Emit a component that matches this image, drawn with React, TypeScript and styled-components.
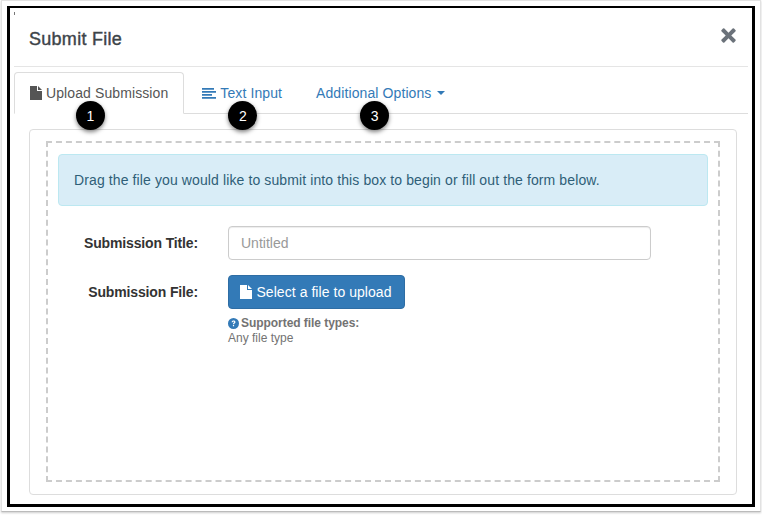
import styled, { createGlobalStyle } from "styled-components";

const GlobalStyle = createGlobalStyle`
  html, body {
    margin: 0;
    padding: 0;
    background: #fff;
  }
  body {
    font-family: "Liberation Sans", Arial, sans-serif;
    color: #333;
  }
`;

const Page = styled.div`
  position: relative;
  width: 762px;
  height: 515px;
  box-sizing: border-box;
  padding: 0 1px 3px 1px;
  background: #fff;
`;

const Shot = styled.div`
  height: 100%;
  box-sizing: border-box;
  border: 1px solid #e2e2e2;
  border-bottom-color: #bbb;
  padding: 5px 5px 4px 5px;
  box-shadow: 0 1px 2px rgba(0, 0, 0, 0.2);
`;

const Speck = styled.span`
  position: absolute;
  top: 12px;
  left: 14px;
  width: 1px;
  height: 3px;
  background: #777;
`;

const Frame = styled.div`
  height: 100%;
  box-sizing: border-box;
  border: 3px solid #000;
  border-top-width: 2px;
  background: #fff;
  display: flex;
  flex-direction: column;
`;

const Header = styled.header`
  height: 59px;
  flex: none;
  margin: 0 4px;
  box-sizing: border-box;
  border-bottom: 1px solid #e5e5e5;
  display: flex;
  justify-content: space-between;
  align-items: flex-start;
  padding: 21px 12px 0 15px;
`;

const Title = styled.h4`
  margin: 0;
  font-size: 18px;
  line-height: 20px;
  font-weight: 400;
  letter-spacing: 0.28px;
  color: #3d4449;
  -webkit-text-stroke: 0.4px #3d4449;
`;

const CloseIcon = styled.svg`
  width: 15px;
  height: 15px;
  margin-top: -1px;
  fill: #6b727a;
`;

const TabBar = styled.nav`
  height: 42px;
  flex: none;
  margin: 5px 4px 0;
  box-sizing: border-box;
  border-bottom: 1px solid #ddd;
  display: flex;
  gap: 2px;
`;

const Tab = styled.div<{ $active?: boolean }>`
  position: relative;
  box-sizing: border-box;
  height: 42px;
  padding: 0 15px;
  display: flex;
  align-items: center;
  gap: 4px;
  font-size: 14px;
  letter-spacing: 0.1px;
  color: ${(p) => (p.$active ? "#555" : "#337ab7")};
  background: ${(p) => (p.$active ? "#fff" : "transparent")};
  border: 1px solid ${(p) => (p.$active ? "#ddd" : "transparent")};
  border-bottom-color: ${(p) => (p.$active ? "#fff" : "transparent")};
  border-radius: 4px 4px 0 0;
`;

const TabIcon = styled.svg<{ $wide?: boolean }>`
  width: ${(p) => (p.$wide ? 14 : 12)}px;
  height: 14px;
  fill: currentColor;
  flex: none;
`;

const Badge = styled.span<{ $left: number }>`
  position: absolute;
  top: 28px;
  left: ${(p) => p.$left}px;
  width: 29px;
  height: 29px;
  border-radius: 50%;
  background: #000;
  color: #fff;
  font-size: 14px;
  letter-spacing: 0;
  display: flex;
  align-items: center;
  justify-content: center;
  box-shadow: 0 2px 4px rgba(0, 0, 0, 0.5);
  z-index: 2;
`;

const Caret = styled.span`
  display: inline-block;
  margin-left: 2px;
  border-top: 4px solid currentColor;
  border-left: 4px solid transparent;
  border-right: 4px solid transparent;
`;

const Panel = styled.section`
  margin: 15px 15px 0 19px;
  height: 366px;
  box-sizing: border-box;
  border: 1px solid #ddd;
  border-radius: 4px;
  padding: 11px 16px 12px 16px;
`;

const DropZone = styled.div`
  height: 100%;
  box-sizing: border-box;
  border: 2px dashed #ccc;
  padding: 11px 10px;
`;

const Alert = styled.div`
  height: 52px;
  box-sizing: border-box;
  background: #d9edf7;
  border: 1px solid #bce8f1;
  border-radius: 4px;
  color: #2f5f78;
  font-size: 14px;
  letter-spacing: 0.11px;
  display: flex;
  align-items: center;
  padding: 0 15px;
  margin-bottom: 20px;
`;

const FormRow = styled.div`
  display: grid;
  grid-template-columns: 140px 423px;
  column-gap: 30px;
  margin-bottom: 15px;
`;

const Label = styled.label`
  font-size: 14px;
  font-weight: 700;
  letter-spacing: -0.14px;
  color: #333;
  text-align: right;
  padding-top: 9px;
  line-height: 16px;
`;

const TextField = styled.input`
  width: 423px;
  height: 34px;
  box-sizing: border-box;
  border: 1px solid #ccc;
  border-radius: 4px;
  padding: 6px 12px;
  font-family: inherit;
  font-size: 14px;
  outline: none;
  box-shadow: inset 0 1px 1px rgba(0, 0, 0, 0.075);
  &::placeholder {
    color: #999;
  }
`;

const UploadButton = styled.button`
  width: 177px;
  height: 34px;
  box-sizing: border-box;
  border: 1px solid #2e6da4;
  border-radius: 4px;
  background: #337ab7;
  color: #fff;
  font-family: inherit;
  font-size: 14px;
  letter-spacing: 0.05px;
  display: flex;
  align-items: center;
  justify-content: center;
  gap: 4px;
  padding: 0 1px 0 0;
`;

const Help = styled.div`
  margin-top: 7px;
  font-size: 12px;
  line-height: 15px;
  color: #737373;
`;

const HelpTitle = styled.div`
  font-weight: 700;
  letter-spacing: -0.05px;
  display: flex;
  align-items: center;
  gap: 2px;
`;

const HelpIcon = styled.svg`
  width: 11px;
  height: 11px;
  flex: none;
`;

const FileGlyph = () => (
  <TabIcon viewBox="0 0 12 14">
    <path d="M0 0h7v5h5v9H0zM8 0l4 4H8z" />
  </TabIcon>
);

export default function App() {
  return (
    <>
      <GlobalStyle />
      <Page>
        <Speck />
        <Shot>
          <Frame>
            <Header>
              <Title>Submit File</Title>
              <CloseIcon viewBox="0 0 15 15">
                <path d="M3.4.6 7.5 4.7 11.6.6a1 1 0 0 1 1.4 0l1.4 1.4a1 1 0 0 1 0 1.4l-4.1 4.1 4.1 4.1a1 1 0 0 1 0 1.4L13 14.4a1 1 0 0 1-1.4 0L7.5 10.3l-4.1 4.1a1 1 0 0 1-1.4 0L.6 13a1 1 0 0 1 0-1.4l4.1-4.1L.6 3.4a1 1 0 0 1 0-1.4L2 .6a1 1 0 0 1 1.4 0z" />
              </CloseIcon>
            </Header>
            <TabBar>
              <Tab $active>
                <FileGlyph />
                Upload Submission
                <Badge $left={61}>1</Badge>
              </Tab>
              <Tab>
                <TabIcon $wide viewBox="0 0 14 14">
                  <path d="M0 2h12v1.7H0zM0 5h14v1.7H0zM0 8h10v1.7H0zM0 11h14v1.7H0z" />
                </TabIcon>
                Text Input
                <Badge $left={41}>2</Badge>
              </Tab>
              <Tab>
                Additional Options
                <Caret />
                <Badge $left={59}>3</Badge>
              </Tab>
            </TabBar>
            <Panel>
              <DropZone>
                <Alert>Drag the file you would like to submit into this box to begin or fill out the form below.</Alert>
                <FormRow>
                  <Label>Submission Title:</Label>
                  <TextField placeholder="Untitled" />
                </FormRow>
                <FormRow>
                  <Label>Submission File:</Label>
                  <div>
                    <UploadButton>
                      <FileGlyph />
                      Select a file to upload
                    </UploadButton>
                    <Help>
                      <HelpTitle>
                        <HelpIcon viewBox="0 0 11 11">
                          <circle cx="5.5" cy="5.5" r="5.5" fill="#337ab7" />
                          <path d="M3.6 4.2c.1-1.2 1-1.8 2-1.8 1.1 0 1.9.7 1.9 1.6 0 1.3-1.4 1.3-1.4 2.3H4.9c0-1.5 1.3-1.6 1.3-2.3 0-.3-.3-.5-.7-.5-.4 0-.7.3-.7.7zM4.9 7h1.2v1.2H4.9z" fill="#fff" />
                        </HelpIcon>
                        Supported file types:
                      </HelpTitle>
                      Any file type
                    </Help>
                  </div>
                </FormRow>
              </DropZone>
            </Panel>
          </Frame>
        </Shot>
      </Page>
    </>
  );
}
